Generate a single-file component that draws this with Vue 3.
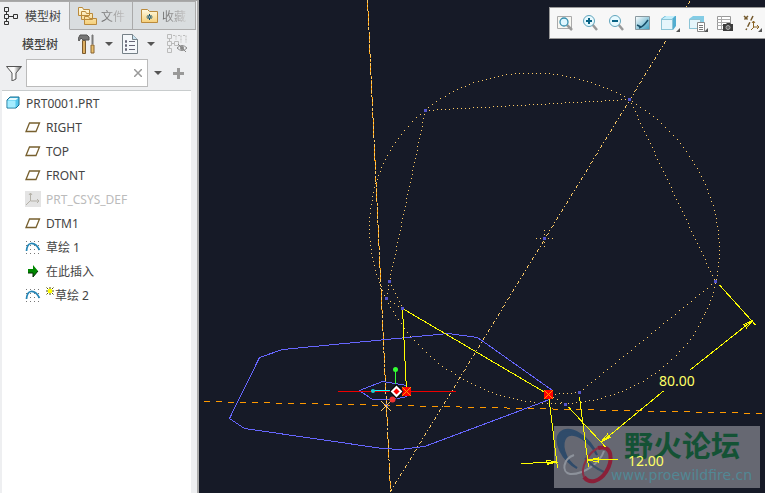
<template>
  <div class="app">
    <aside class="side">
      <nav class="tabs">
        <button class="tab active">
          <svg width="14" height="20" viewBox="0 0 14 20" fill="none" stroke="#333"><path d="M.5 1.500h4v4h-4zM.5 8.500h4v4h-4zM.5 15.500h4v3h-4zM9.500 8.500h4v4h-4zM2.500 6v2M2.500 13v2M5 10.500h4" /></svg>
          <span>模型树</span>
        </button>
        <button class="tab">
          <svg width="19" height="20" viewBox="0 0 19 20" fill="url(#paper)" stroke="#ba8a3c">
            <path d="M.5 9.500v-8h4l1 2h6v6zM3.500 13.500v-8h4l1 2h6v6zM6.500 18.500v-8h4l1 2h7v6z" />
          </svg>
          <span class="fade">文件</span>
        </button>
        <button class="tab">
          <svg width="17" height="16" viewBox="0 0 17 16"><path d="M.5 14.500v-13h6l2 2h8v11z" fill="url(#paper)" stroke="#ba8a3c" /><path d="M8.500 6v6M5.500 9h6M6.500 7l4 4M10.500 7l-4 4" stroke="#12516d" /><path d="M8 8.500h1v1H8z" fill="#fff" /></svg>
          <span class="fade">收藏</span>
        </button>
      </nav>

      <div class="tools">
        <strong>模型树</strong>
        <button class="tool" aria-label="设置">
          <svg width="18" height="20" viewBox="0 0 18 20"><path d="M4.500 6.500h3v13h-3z" fill="#dcae61" stroke="#7b5a2d" /><path d="M0 5l2-4h7l2 2v3H5L3 4 1 7z" fill="#777" stroke="#555" /><path d="M14 1h1v9h-1z" fill="#888" stroke="#777" /><path d="M13 11h3v8h-3z" fill="#ebc06c" stroke="#866331" /></svg>
        </button>
        <button class="tool caret" aria-label="设置选项"><i></i></button>
        <button class="tool" aria-label="显示">
          <svg width="16" height="20" viewBox="0 0 16 20"><path d="M.5.5h10l5 5v14H.5z" fill="#f4f7fa" stroke="#758087" /><path d="M10.500.5v5h5" fill="#cbe4f1" stroke="#758087" /><path d="M7 7.500h6M7 11.500h6M7 15.500h6" stroke="#667" /><path d="M3.500 6.500h1v2h-1zM3.500 10.500h1v2h-1zM3.500 14.500h1v2h-1z" fill="#fff" stroke="#667" /></svg>
        </button>
        <button class="tool caret" aria-label="显示选项"><i></i></button>
        <button class="tool hide" aria-label="隐藏树" disabled>
          <svg width="21" height="20" viewBox="0 0 21 20" fill="none" stroke="#bbb"><path d="M.5.500h4v4h-4zM.5 7.500h4v4h-4zM.5 14.500h4v4h-4zM2.500 5v2M2.500 12v2M5 9.500h2M7.500 7.500h4v4h-4z" /><path d="M6 1.500h3v4M11 1.500h3v7M16 1.500h3v7" stroke-dasharray="2 1" /><path d="M10 14q5-5 10 0q-5 5-10 0M11 10l8 8" stroke="#888" /><circle cx="15" cy="14" r="2" fill="#888" stroke="none" /></svg>
        </button>
      </div>

      <div class="filter">
        <svg width="16" height="15" viewBox="0 0 16 15"><path d="M.5.5h15L10 7v6l-4 2V7z" fill="url(#steel)" stroke="#555" /></svg>
        <div class="search">
          <input v-model="query" type="text" aria-label="过滤" />
          <button aria-label="清除" @click="query = ''"><svg width="8" height="8" viewBox="0 0 8 8"><path d="M0 0l8 8M8 0L0 8" stroke="#999" stroke-width="1.500" /></svg></button>
        </div>
        <button class="tool caret" aria-label="过滤选项"><i></i></button>
        <button class="tool plus" aria-label="添加"><svg width="11" height="11" viewBox="0 0 11 11"><path d="M5.500 0v11M0 5.500h11" stroke="#999" stroke-width="3" /></svg></button>
      </div>

      <div class="tree">
        <div class="row root">
          <svg width="14" height="14" viewBox="0 0 14 14"><path d="M1 4l3-3h9v8l-3 3H1z" fill="#55c7ed" stroke="#166f93" /><path d="M1.500 4.500h8v7h-8z" fill="#a4ecff" /><path d="M2 4l2-2h8l-2 2z" fill="#e5faff" /></svg>
          <span>PRT0001.PRT</span>
        </div>
        <div v-for="item in items" :key="item.name" class="row" :class="{ muted: item.type === 'csys' }">
          <svg v-if="item.type === 'plane'" width="16" height="14" viewBox="0 0 16 14"><path d="M4.500 3h10l-3.500 8.500H1z" fill="none" stroke="#77602f" stroke-width="1.300" /></svg>
          <svg v-else-if="item.type === 'csys'" width="16" height="16" viewBox="0 0 16 16"><path d="M0 0h16v16H0z" fill="#e4e4e4" /><path d="M5.500 2v8H14M5 10l-4 4M4 4l1.500-2L7 4M12 8l2 2-2 2" fill="none" stroke="#b4b1a8" /></svg>
          <svg v-else-if="item.type === 'insert'" width="16" height="14" viewBox="0 0 16 14"><path d="M3 5h5V1l5 6-5 6V9H3z" fill="#080" /><path d="M3 9h5v4l5-6" fill="none" stroke="#052c05" /></svg>
          <svg v-else width="16" height="14" viewBox="0 0 16 14"><path d="M1 1.500h14M1 5.500h14M1 9.500h14M1 13.500h14" stroke="#777" stroke-dasharray="1 3" /><path d="M1.500 11Q2 4 6 3.500Q11 3 14.500 10" fill="none" stroke="#2586b6" stroke-width="1.700" /></svg>
          <svg v-if="item.fresh" class="star" width="8" height="8" viewBox="0 0 8 8"><path d="M4 0v8M0 4h8M.5.5l7 7M7.500.5l-7 7" stroke="#565600" /><path d="M2 2h4v4H2z" fill="#ff0" /></svg>
          <span>{{ item.name }}</span>
        </div>
      </div>
    </aside>

    <main class="canvas">
      <svg class="sketch" width="566" height="493" viewBox="199 0 566 493" fill="none" shape-rendering="crispEdges">
        <defs>
          <linearGradient id="paper" x2="0" y2="1"><stop stop-color="#fffbe4" /><stop offset="1" stop-color="#f5cf79" /></linearGradient>
          <linearGradient id="steel"><stop stop-color="#eee" /><stop offset=".5" stop-color="#fff" /><stop offset="1" stop-color="#555" /></linearGradient>
          <linearGradient id="aqua" x2="1" y2="1"><stop stop-color="#fff" /><stop offset="1" stop-color="#3d9fc0" /></linearGradient>
          <g id="arrow"><path d="M0 0l10-2v4z" /></g>
        </defs>

        <g class="watermark" shape-rendering="auto">
          <path d="M554 426h206v62H554z" fill="#666872" />
          <path d="M597 455C590 437 570 424 560 433C553 441 562 460 577 468C563 459 561 443 566 437C573 430 590 441 597 455Z" fill="#2f4b6a" stroke="#2f4b6a" stroke-width="2" />
          <path d="M574 455C563 459 561 472 570 474C583 475 600 463 604 451" stroke="#8d929b" stroke-width="2" />
          <path d="M585 458C590 464 597 469 604 472" stroke="#3c5069" stroke-width="2" />
          <path d="M598 448C588 453 580 468 584 477" stroke="#8a3046" stroke-width="2" />
          <path d="M598 448C613 444 613 461 606 472C600 481 590 485 584 477" stroke="#8a2038" stroke-width="4" />
          <text x="624" y="457" class="brand">野火论坛</text>
          <text x="611" y="480" class="url">www.proewildfire.cn</text>
        </g>

        <path d="M367.500 0L390.500 492" stroke="#ff9900" stroke-dasharray="10 2 2 2" />
        <path d="M367.500 0L390.500 492" stroke="#ffcc66" stroke-dasharray="3 2 2 2" />
        <path :d="dotPath" fill="#ffcc66" />
        <path :d="axisPath" fill="#ffcc66" />
        <path :d="horizonPath" fill="#ff9900" />

        <g stroke="#6666ff">
          <path d="M229.500 418.500L259.500 357.500L282.500 349.500L448.500 333.500L477.500 337.500L552.500 390.500M549.500 399.500L520.500 410.500L424.500 446.500L400.500 449.500L382.500 448.500L244.500 428.500L229.500 418.500" />
          <path d="M407.500 385.500L382.500 381.500L359.500 390.500L372.500 399.500L392.500 399.500L407.500 396.500" />
        </g>

        <g stroke="#ffff00">
          <path d="M406.500 391.500L402.500 308.500L548.500 394.500L557.500 468M579.500 397L588.500 467M568.500 407L605.500 447M719.500 285L755.500 325" />
          <path d="M601 442.500L663.500 391M690 370L753 320M521 463.500L558 462M588 459.500H618" />
          <use href="#arrow" transform="translate(601 442) rotate(-39)" />
          <use href="#arrow" transform="translate(753 320) rotate(141)" />
          <use href="#arrow" transform="translate(557 462) rotate(178)" />
          <use href="#arrow" transform="translate(588 460)" />
        </g>
        <g class="dim">
          <text x="659" y="386">80.00</text>
          <text x="628" y="466">12.00</text>
        </g>

        <path v-for="p in points" :key="p.join()" :d="`M${p[0] - 1} ${p[1] - 1}h3v3h-3z`" fill="#5555cc" />
        <path d="M338 391.500H456" stroke="#e00" />
        <path d="M371 390.500H390" stroke="#0ff" />
        <path d="M395.500 371V384" stroke="#3f3" />
        <path d="M381 401l10 10M391 401l-10 10" stroke="#ffcc66" />
        <g v-for="p in anchors" :key="p.join()" :transform="`translate(${p[0]} ${p[1]})`">
          <path d="M-4-4h9v9h-9z" fill="#f00" />
          <path d="M-4-4l9 9M5-4l-9 9" stroke="#f90" />
        </g>
        <g shape-rendering="auto">
          <circle cx="373" cy="391" r="2" fill="#2cc" />
          <circle cx="395.500" cy="369.500" r="2.500" fill="#3f3" />
          <circle cx="392.500" cy="399.500" r="3" fill="#e33" />
          <path d="M396.500 384l7 7.500-7 7.500-7-7.500z" fill="#000" />
          <path d="M396.500 387l4.500 4.500-4.500 4.500-4.500-4.500z" fill="#f00" stroke="#fff" stroke-width="2" />
        </g>
      </svg>

      <div class="viewbar">
        <button aria-label="重新调整">
          <svg width="18" height="18" viewBox="0 0 18 18"><path d="M1.500 2.500h14v12h-14z" fill="#f7f7f2" stroke="#aaa" /><path d="M11 11l5 5" stroke="#999" stroke-width="2.500" /><circle cx="8" cy="8" r="4" fill="#dff7ff" stroke="#368eae" stroke-width="1.300" /></svg>
        </button>
        <button v-for="z in ['放大', '缩小']" :key="z" :aria-label="z">
          <svg width="18" height="18" viewBox="0 0 18 18"><path d="M10 10l5 6" stroke="#999" stroke-width="2.500" /><circle cx="7" cy="7" r="5.500" fill="#e8faff" stroke="#61a5bd" /><path :d="z === '放大' ? 'M7 4v6M4 7h6' : 'M4 7h6'" stroke="#096385" stroke-width="2" /></svg>
        </button>
        <button aria-label="重画"><svg width="18" height="18" viewBox="0 0 18 18"><path d="M1.500 2.500h14v13h-14z" fill="url(#aqua)" stroke="#8999a0" /><path d="M5 14Q9 13 14 6M3 11l4 2" fill="none" stroke="#164d67" stroke-width="1.500" /></svg></button>
        <button aria-label="显示样式"><svg width="20" height="18" viewBox="0 0 20 18"><path d="M1 5l4-3h11v10l-3 4H1z" fill="#52add0" /><path d="M2 5l4-3h9l-3 3z" fill="#c5effb" /><path d="M1.500 5.500h11v10h-11z" fill="#e5f5fb" stroke="#8cc4d6" /><path d="M20 14v4h-4z" fill="#555" /></svg></button>
        <button aria-label="已保存方向"><svg width="20" height="18" viewBox="0 0 20 18"><path d="M1 5l4-3h11v9l-3 4H1z" fill="#83cce5" /><path d="M1.500 5.500h11v9h-11z" fill="#e5f5fb" stroke="#8cc4d6" /><path d="M9.500 8.500h7v9h-7z" fill="#fff" stroke="#888" /><path d="M11 11.500h4M11 13.500h4M11 15.500h4" stroke="#777" /><path d="M20 14v4h-4z" fill="#555" /></svg></button>
        <button aria-label="视图管理器"><svg width="18" height="18" viewBox="0 0 18 18"><path d="M1.500 2.500h13v13h-13z" fill="#fff" stroke="#999" /><path d="M1 5.500h13M1 8.500h13M1 11.500h13M5.500 2v13" stroke="#aaa" /><path d="M7 10h3l1-1h3l1 1h2v7H7z" fill="#3c3c3c" /><circle cx="12" cy="13.500" r="2" fill="#666" stroke="#aaa" /></svg></button>
        <button aria-label="基准显示"><svg width="20" height="18" viewBox="0 0 20 18"><path d="M2 2l4 4M6 2L2 6M11 2L4 16" stroke="#73582b" stroke-width="1.500" stroke-dasharray="5 2" /><path d="M11.500 7v6H17M12 13l-3 3M10 9l1.500-2L13 9M15 11l2 2-2 2" fill="none" stroke="#8b6526" /><path d="M20 14v4h-4z" fill="#555" /></svg></button>
      </div>
    </main>
  </div>
</template>

<script setup>
import { ref } from 'vue'

const query = ref('')

const items = [
  { name: 'RIGHT', type: 'plane' },
  { name: 'TOP', type: 'plane' },
  { name: 'FRONT', type: 'plane' },
  { name: 'PRT_CSYS_DEF', type: 'csys' },
  { name: 'DTM1', type: 'plane' },
  { name: '草绘 1', type: 'sketch' },
  { name: '在此插入', type: 'insert' },
  { name: '草绘 2', type: 'sketch', fresh: true }
]

const points = [[425, 110], [629, 99], [715, 281], [579, 392], [565, 404], [389, 281], [386, 298], [402, 308], [544, 238], [386, 405]]
const anchors = [[406, 391], [548, 394]]

const dot = (x, y) => `M${Math.round(x)} ${Math.round(y)}h1v1h-1z`

// 沿主轴方向逐像素画线, mask 中的 1 表示该像素可见
const pixelLine = ([x1, y1], [x2, y2], mask) => {
  const n = Math.max(Math.abs(x2 - x1), Math.abs(y2 - y1))
  let d = ''
  for (let i = 0; i <= n; i++) {
    if (mask[i % mask.length] === '1') {
      d += dot(x1 + (x2 - x1) * i / n, y1 + (y2 - y1) * i / n)
    }
  }
  return d
}

const pixelEllipse = (cx, cy, rx, ry, angle) => {
  const a = angle * Math.PI / 180
  let d = ''
  let last = null
  for (let i = 0; i < 3600; i++) {
    const t = i * Math.PI / 1800
    const u = rx * Math.cos(t)
    const v = ry * Math.sin(t)
    const x = cx + u * Math.cos(a) - v * Math.sin(a)
    const y = cy + u * Math.sin(a) + v * Math.cos(a)
    if (!last || Math.max(Math.abs(x - last[0]), Math.abs(y - last[1])) >= 4) {
      d += dot(x, y)
      last = [x, y]
    }
  }
  return d
}

const dotted = [
  [[425, 110], [629, 99]],
  [[629, 99], [715, 281]],
  [[715, 281], [579, 392]],
  [[579, 392], [549, 394]],
  [[549, 394], [565, 404]],
  [[425, 110], [389, 281]],
  [[389, 281], [402, 308]],
  [[389, 281], [386, 298]],
  [[386, 298], [402, 308]],
  [[536, 238], [553, 238]],
  [[544, 230], [544, 247]]
]

const dotPath = pixelEllipse(544, 238, 177.5, 162.5, 25.4) + dotted.map(([a, b]) => pixelLine(a, b, '1000')).join('')
const axisPath = pixelLine([390, 491], [690, 0], '11100100')
const horizonPath = pixelLine([204, 401], [762, 413], '111111000000')
</script>

<style>
body {
  background: #161a27;
}
</style>

<style scoped>
.app {
  display: flex;
  min-height: 100vh;
  overflow: hidden;
  font: 12px "Noto Sans", "Noto Sans CJK SC", sans-serif;
  color: #444;
}

button {
  padding: 0;
  border: 0;
  background: none;
  font: inherit;
  color: inherit;
}

svg {
  display: block;
  flex: none;
}

.side {
  box-sizing: border-box;
  display: flex;
  flex-direction: column;
  flex: 0 0 199px;
  background: #eeeff1;
  border-top: 1px solid #a4a4a4;
  border-right: 2px solid #aaa;
}

.tabs {
  display: flex;
  height: 29px;
  margin-right: 1px;
}

.tab {
  box-sizing: border-box;
  display: flex;
  align-items: center;
  gap: 4px;
  flex: 0 0 63px;
  overflow: hidden;
  padding-left: 8px;
  border: solid #aaa;
  border-width: 1px 1px 1px 0;
  background: #d9dddf;
  white-space: nowrap;
}

.tab.active {
  flex: 0 0 70px;
  gap: 7px;
  padding-left: 4px;
  border-bottom-color: transparent;
  background: #eeeff1;
}

.fade {
  color: transparent;
  background: linear-gradient(90deg, #666, #ccc);
  background-clip: text;
}

.tools {
  display: flex;
  align-items: center;
  height: 28px;
  padding-left: 22px;
}

.tools strong {
  width: 56px;
  font-weight: 500;
}

.caret {
  padding: 4px 9px;
}

.caret i {
  display: block;
  border: 4px solid transparent;
  border-top-color: #555;
  border-bottom: 0;
}

.hide {
  margin-left: 3px;
}

.filter {
  display: flex;
  align-items: center;
  height: 30px;
  padding-left: 6px;
}

.search {
  box-sizing: border-box;
  display: flex;
  align-items: center;
  width: 122px;
  height: 28px;
  margin-left: 4px;
  padding-right: 5px;
  border: 1px solid #bbb;
  background: #fff;
}

.search input {
  flex: 1;
  min-width: 0;
  border: 0;
  outline: 0;
  background: none;
}

.filter .caret {
  padding: 4px 6px;
}

.plus {
  margin-left: 5px;
}

.tree {
  flex: 1;
  margin: 2px 6px 0 2px;
  border-top: 1px solid #c8cccd;
  background: #fff;
}

.row {
  display: flex;
  align-items: center;
  gap: 5px;
  height: 24px;
  padding-left: 23px;
  white-space: nowrap;
}

.root {
  gap: 6px;
  padding-left: 4px;
}

.muted {
  color: #bbb;
}

.star {
  align-self: flex-start;
  margin: 4px -4px 0 0;
}

.canvas {
  position: relative;
  flex: 1;
  min-width: 0;
  overflow: hidden;
  background: #161a27;
}

.brand {
  font: bold 29px "Noto Sans CJK SC", sans-serif;
  fill: #145235;
}

.url {
  font: 14px "DejaVu Sans", sans-serif;
  fill: #528794;
}

.dim {
  font: 14px "Noto Sans", sans-serif;
  fill: #ffff66;
}

.viewbar {
  position: absolute;
  top: 7px;
  right: 0;
  box-sizing: border-box;
  display: flex;
  align-items: center;
  gap: 8px;
  height: 32px;
  padding: 0 3px 0 6px;
  border: 1px solid #999;
  border-right: 0;
  background: #f7f7f7;
}
</style>
